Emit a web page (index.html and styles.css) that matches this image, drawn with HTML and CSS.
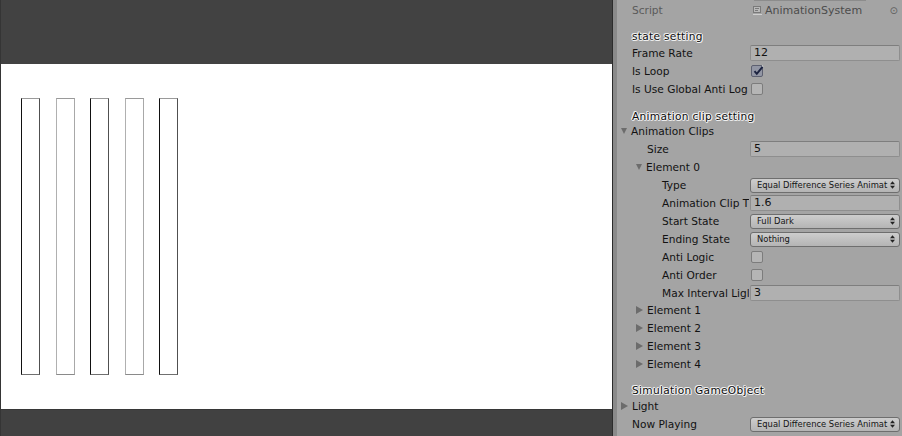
FILE: index.html
```html
<!DOCTYPE html>
<html>
<head>
<meta charset="utf-8">
<link rel="stylesheet" href="styles.css">
</head>
<body>
<div class="app">
  <div class="game">
    <div class="game-top"></div>
    <div class="game-view">
      <div class="bars">
        <div class="bar dark"></div>
        <div class="bar light"></div>
        <div class="bar dark"></div>
        <div class="bar light"></div>
        <div class="bar dark"></div>
      </div>
    </div>
    <div class="game-bottom"></div>
  </div>
  <div class="divider"></div>
  <div class="inspector">
    <div class="top-edge"></div>
    <div class="row">
      <div class="label muted">Script</div>
      <div class="objfield">
        <svg class="scripticon" width="9" height="9" viewBox="0 0 9 9"><rect x="0.5" y="0.5" width="7" height="6" fill="#b9b9b9" stroke="#7a7a7a"/><path d="M2 2.5h4M2 4.5h3" stroke="#7a7a7a"/><path d="M0 8.5h9" stroke="#cfcfcf"/></svg>
        <span>AnimationSystem</span>
      </div>
      <div class="pick">⊙</div>
    </div>
    <div class="header h1">state setting</div>
    <div class="row">
      <div class="label">Frame Rate</div>
      <div class="field">12</div>
    </div>
    <div class="row">
      <div class="label">Is Loop</div>
      <div class="check on"><svg width="12" height="12" viewBox="0 0 12 12"><path d="M2.5 6.2l2.3 2.6L10.5 1.8" fill="none" stroke="#1c2340" stroke-width="2"/><path d="M10.2 0.8l1 0.8" stroke="#fff" stroke-width="1"/></svg></div>
    </div>
    <div class="row">
      <div class="label">Is Use Global Anti Log</div>
      <div class="check"></div>
    </div>
    <div class="header h2">Animation clip setting</div>
    <div class="row">
      <div class="label fold open">Animation Clips</div>
    </div>
    <div class="row">
      <div class="label l1">Size</div>
      <div class="field">5</div>
    </div>
    <div class="row">
      <div class="label l1 fold open">Element 0</div>
    </div>
    <div class="row">
      <div class="label l2">Type</div>
      <div class="drop"><span>Equal Difference Series Animat</span><svg class="arr" width="5" height="8" viewBox="0 0 5 8"><path d="M0 3.3L2.5 0.3L5 3.3zM0 4.7L2.5 7.7L5 4.7z" fill="#222"/></svg></div>
    </div>
    <div class="row">
      <div class="label l2">Animation Clip T</div>
      <div class="field">1.6</div>
    </div>
    <div class="row">
      <div class="label l2">Start State</div>
      <div class="drop"><span>Full Dark</span><svg class="arr" width="5" height="8" viewBox="0 0 5 8"><path d="M0 3.3L2.5 0.3L5 3.3zM0 4.7L2.5 7.7L5 4.7z" fill="#222"/></svg></div>
    </div>
    <div class="row">
      <div class="label l2">Ending State</div>
      <div class="drop"><span>Nothing</span><svg class="arr" width="5" height="8" viewBox="0 0 5 8"><path d="M0 3.3L2.5 0.3L5 3.3zM0 4.7L2.5 7.7L5 4.7z" fill="#222"/></svg></div>
    </div>
    <div class="row">
      <div class="label l2">Anti Logic</div>
      <div class="check"></div>
    </div>
    <div class="row">
      <div class="label l2">Anti Order</div>
      <div class="check"></div>
    </div>
    <div class="row short">
      <div class="label l2">Max Interval Ligl</div>
      <div class="field">3</div>
    </div>
    <div class="row"><div class="label l1 fold">Element 1</div></div>
    <div class="row"><div class="label l1 fold">Element 2</div></div>
    <div class="row"><div class="label l1 fold">Element 3</div></div>
    <div class="row"><div class="label l1 fold">Element 4</div></div>
    <div class="header h3">Simulation GameObject</div>
    <div class="row"><div class="label fold">Light</div></div>
    <div class="row">
      <div class="label">Now Playing</div>
      <div class="drop"><span>Equal Difference Series Animat</span><svg class="arr" width="5" height="8" viewBox="0 0 5 8"><path d="M0 3.3L2.5 0.3L5 3.3zM0 4.7L2.5 7.7L5 4.7z" fill="#222"/></svg></div>
    </div>
  </div>
</div>
</body>
</html>
```
FILE: styles.css
```css
html, body {
  margin: 0;
  padding: 0;
  width: 902px;
  height: 436px;
  overflow: hidden;
  background: #a4a4a4;
}
.app {
  display: flex;
  width: 902px;
  height: 436px;
  font-family: "DejaVu Sans", "Lucida Grande", sans-serif;
}
.game {
  width: 611px;
  border-left: 1px solid #353535;
  display: flex;
  flex-direction: column;
  flex: none;
}
.game-top {
  height: 64px;
  background: #424242;
  flex: none;
}
.game-view {
  height: 345px;
  background: #ffffff;
  flex: none;
}
.game-bottom {
  flex: 1;
  background: #414141;
  border-top: 1px solid #373737;
}
.bars {
  display: flex;
  gap: 15.5px;
  padding-left: 20px;
  padding-top: 34px;
}
.bar {
  width: 17px;
  height: 275px;
  box-sizing: content-box;
  border: 1px solid;
}
.bar.dark {
  border-color: #9a9a9a #505050 #707070 #111111;
}
.bar.light {
  border-color: #9a9a9a #a8a8a8 #8a8a8a #b0b0b0;
}
.divider {
  width: 4px;
  flex: none;
  border-left: 1px solid #2c2c2c;
  background: #8a8a8a;
}
.inspector {
  flex: 1;
  background: #a4a4a4;
  padding-left: 3px;
  padding-right: 2px;
  display: flex;
  flex-direction: column;
  font-size: 10.6px;
  color: #121212;
}
.top-edge {
  height: 1px;
  margin-left: 134px;
  margin-right: 34px;
  background: #8c8c8c;
  flex: none;
}
.row {
  height: 18px;
  display: flex;
  align-items: center;
  flex: none;
}
.row.short {
  height: 17px;
  align-items: flex-start;
  padding-top: 1px;
  box-sizing: border-box;
}
.row.short .label { line-height: 16px; }
.label {
  width: 129px;
  margin-right: 1px;
  padding-left: 12px;
  flex: none;
  white-space: nowrap;
  overflow: hidden;
  box-sizing: border-box;
  line-height: 18px;
}
.label.muted { color: #5a5a5a; }
.label.l1 { padding-left: 27px; }
.label.l2 { padding-left: 42px; }
.label.fold::before {
  content: "";
  display: inline-block;
  vertical-align: middle;
  margin-left: -11px;
  margin-right: 4px;
  margin-top: -2px;
  width: 0;
  height: 0;
  border-style: solid;
  border-width: 4px 0 4px 7px;
  border-color: transparent transparent transparent #6c6c6c;
}
.label.fold.open::before {
  border-width: 6px 3.5px 0 3.5px;
  border-color: #6c6c6c transparent transparent transparent;
  margin-right: 4px;
}
.header {
  height: 16px;
  line-height: 16px;
  flex: none;
  padding-left: 12px;
  box-sizing: border-box;
  color: #0c0c0c;
  letter-spacing: 0.3px;
  text-shadow: 1px 0 0 #f2f2f2, -1px 0 0 #f2f2f2, 0 1px 0 #f2f2f2, 0 -1px 0 #f2f2f2, 1px 1px 0 #e6e6e6, -1px -1px 0 #e6e6e6;
  white-space: nowrap;
}
.h1 { margin-top: 9px; }
.h2 { margin-top: 8px; padding-top: 2px; }
.h3 { margin-top: 9px; padding-top: 1px; height: 15px; line-height: 15px; }
.field {
  width: 150px;
  height: 16px;
  box-sizing: border-box;
  background: #b0b0b0;
  border: 1px solid #8e8e8e;
  border-top-color: #7e7e7e;
  border-radius: 2px;
  padding-left: 3px;
  line-height: 14px;
  font-size: 11px;
  flex: none;
}
.check {
  width: 12px;
  height: 12px;
  box-sizing: border-box;
  border: 1px solid #7c7c7c;
  border-radius: 2px;
  background: #b5b5b5;
  margin-left: 1px;
  position: relative;
  flex: none;
}
.check.on {
  background: #9296a4;
  border-color: #5d6070;
}
.check svg {
  position: absolute;
  left: 0;
  top: -1px;
}
.drop {
  width: 150px;
  height: 15px;
  box-sizing: border-box;
  border: 1px solid #6e6e6e;
  border-radius: 3px;
  background: linear-gradient(#cdcdcd, #b4b4b4);
  display: flex;
  align-items: center;
  padding-left: 6px;
  padding-right: 4px;
  font-size: 8.4px;
  color: #141414;
  flex: none;
}
.drop span { flex: 1; white-space: nowrap; overflow: hidden; }
.drop .arr { flex: none; }
.objfield {
  width: 112px;
  height: 16px;
  display: flex;
  align-items: center;
  gap: 3px;
  padding-left: 3px;
  box-sizing: border-box;
  color: #4c4c4c;
  font-size: 11px;
  flex: none;
}
.scripticon { flex: none; }
.pick {
  margin-left: auto;
  margin-right: 2px;
  color: #5f5f5f;
  font-size: 10px;
}
```
